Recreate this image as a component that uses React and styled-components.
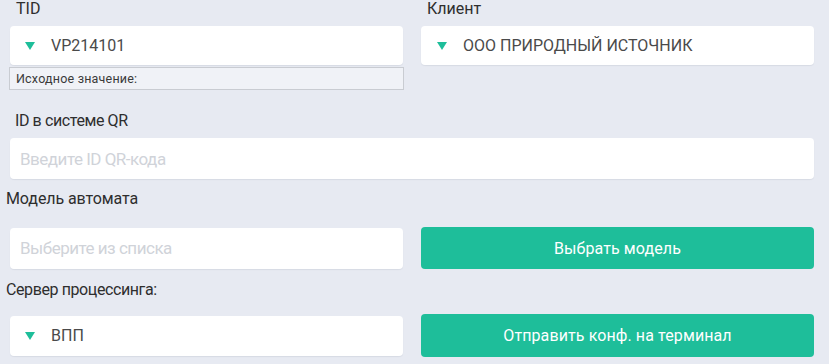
import React from "react";
import styled, { createGlobalStyle } from "styled-components";

const GlobalStyle = createGlobalStyle`
  html, body {
    margin: 0;
    padding: 0;
    background: #e7eaf2;
  }
  body {
    font-family: Roboto, "Noto Sans", "Liberation Sans", sans-serif;
    color: #333;
  }
`;

const Page = styled.div`
  width: 829px;
  height: 364px;
  overflow: hidden;
  box-sizing: border-box;
  padding: 0 15px 0 10px;
  background: #e7eaf2;
`;

const Row = styled.div`
  display: grid;
  grid-template-columns: 1fr 1fr;
  column-gap: 18px;
  align-items: ${(p) => p.align || "start"};
  margin-top: ${(p) => p.mt || 0}px;
`;

const Field = styled.div`
  display: flex;
  flex-direction: column;
`;

const Label = styled.div`
  font-size: ${(p) => p.size || 16}px;
  line-height: 20px;
  height: 20px;
  color: #2e2e2e;
  padding-left: ${(p) => p.indent ?? 6}px;
  margin-left: ${(p) => p.shift || 0}px;
  margin-top: ${(p) => p.mt || 0}px;
  margin-bottom: ${(p) => p.mb || 0}px;
  letter-spacing: ${(p) => p.ls || 0}px;
`;

const Box = styled.div`
  display: flex;
  align-items: center;
  box-sizing: border-box;
  height: ${(p) => p.h || 40}px;
  background: #fff;
  border-radius: 4px;
  box-shadow: 0 1px 1px rgba(40, 50, 80, 0.08);
  padding: 0 ${(p) => p.px || 16}px;
  font-size: 16px;
  color: #4a4a4a;
`;

const Placeholder = styled.span`
  color: #d0d3d9;
  font-size: 17px;
  letter-spacing: -0.5px;
`;

const Caret = styled.span`
  width: 0;
  height: 0;
  border-left: 5px solid transparent;
  border-right: 5px solid transparent;
  border-top: 8px solid #1ebe9a;
  margin: 1px 16px 0 0;
  flex-shrink: 0;
`;

const Note = styled.div`
  box-sizing: border-box;
  height: 23px;
  margin: 2px 0 0 -1px;
  width: calc(100% + 2px);
  background: #f0f2f7;
  border: 1px solid #c9ccd2;
  font-size: 12.5px;
  line-height: 21px;
  padding-left: 6px;
  color: #3a3a3a;
  letter-spacing: 0.2px;
`;

const Button = styled.button`
  height: ${(p) => p.h || 42}px;
  border: none;
  border-radius: 4px;
  background: #1ebe9a;
  color: #fff;
  font-family: inherit;
  font-size: 16px;
  letter-spacing: 0.1px;
  cursor: pointer;
`;

export default function App() {
  return (
    <>
      <GlobalStyle />
      <Page>
        <Row>
          <Field>
            <Label mt={-1} mb={7}>TID</Label>
            <Box h={39} px={15}>
              <Caret />
              VP214101
            </Box>
            <Note>Исходное значение:</Note>
          </Field>
          <Field>
            <Label mt={-1} mb={7}>Клиент</Label>
            <Box h={39} px={16}>
              <Caret />
              ООО ПРИРОДНЫЙ ИСТОЧНИК
            </Box>
          </Field>
        </Row>

        <Label mt={21} mb={7} indent={5} ls={-0.4}>ID в системе QR</Label>
        <Box h={41} px={10}>
          <Placeholder>Введите ID QR-кода</Placeholder>
        </Box>

        <Label mt={10} mb={0} indent={0} shift={-4} ls={-0.1}>Модель автомата</Label>

        <Row mt={18} align="center">
          <Box h={41} px={10}>
            <Placeholder>Выберите из списка</Placeholder>
          </Box>
          <Button h={42}>Выбрать модель</Button>
        </Row>

        <Label mt={11} mb={0} indent={0} shift={-4} ls={-0.4}>Сервер процессинга:</Label>

        <Row mt={14} align="center">
          <Box h={40} px={15}>
            <Caret />
            ВПП
          </Box>
          <Button h={43}>Отправить конф. на терминал</Button>
        </Row>
      </Page>
    </>
  );
}
